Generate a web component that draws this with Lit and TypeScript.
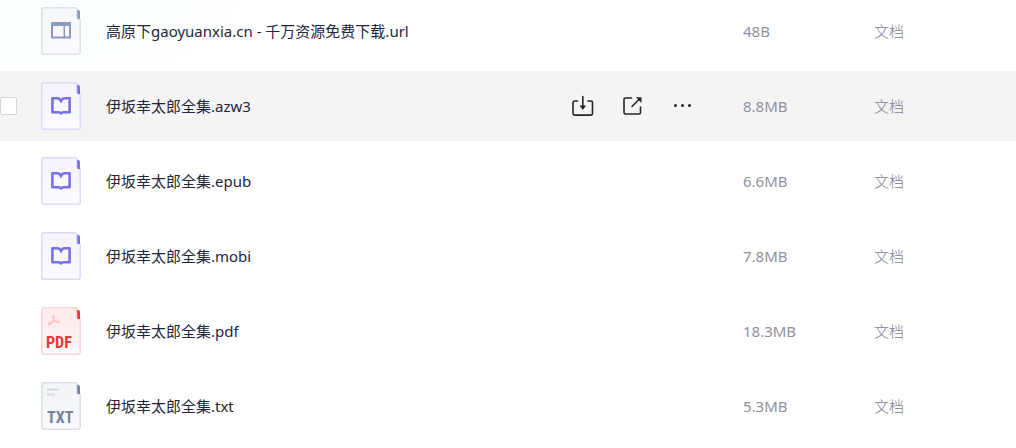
import { LitElement, html, svg, css } from "lit";
import { customElement, property, state } from "lit/decorators.js";
import { classMap } from "lit/directives/class-map.js";

type Kind = "url" | "book" | "pdf" | "txt";

interface FileEntry {
  name: string;
  kind: Kind;
  size: string;
  type: string;
}

const FILES: FileEntry[] = [
  { name: "高原下gaoyuanxia.cn - 千万资源免费下载.url", kind: "url", size: "48B", type: "文档" },
  { name: "伊坂幸太郎全集.azw3", kind: "book", size: "8.8MB", type: "文档" },
  { name: "伊坂幸太郎全集.epub", kind: "book", size: "6.6MB", type: "文档" },
  { name: "伊坂幸太郎全集.mobi", kind: "book", size: "7.8MB", type: "文档" },
  { name: "伊坂幸太郎全集.pdf", kind: "pdf", size: "18.3MB", type: "文档" },
  { name: "伊坂幸太郎全集.txt", kind: "txt", size: "5.3MB", type: "文档" },
];

const GLYPHS = {
  url: svg`
    <path class="ink" fill-rule="evenodd" d="M11 15h18a1 1 0 0 1 1 1v14.500a1 1 0 0 1-1 1H11a1 1 0 0 1-1-1V16a1 1 0 0 1 1-1z M12 19v10.500h10.500V19z M24 19v10.500h4V19z"/>`,
  book: svg`
    <path class="line" d="M20 19c-.9-1.800-2-2.700-3.600-2.700H11.400v13.900h6c1.200 0 2 .4 2.600 1.300.6-.9 1.400-1.300 2.600-1.300h6V16.300h-5c-1.600 0-2.700.9-3.600 2.700z"/>
    <path class="ink" d="M18 17.500h4L20 21.500z"/>`,
  pdf: svg`
    <path class="faint" d="M12 8.500c1.400 0 1.500 1.300 1 3-.4 2-2.500 5.300-4.500 6.200-1.600.4-1.500-.9 0-1.700 2.500-1.400 6.500-2.400 9-1.800 1.500.6.500 1.600-1 1.200-2-.6-4.500-3.200-5-5.400-.2-.9 0-1.500.5-1.500z"/>
    <text class="label" x="5" y="41">PDF</text>`,
  txt: svg`
    <path class="bar" d="M6 7.500h12M6 12.500h8"/>
    <text class="label" x="6" y="41">TXT</text>`,
};

@customElement("file-icon")
export class FileIcon extends LitElement {
  @property({ reflect: true }) kind: Kind = "txt";

  static styles = css`
    :host {
      display: block;
      width: 40px;
      height: 48px;
      --ink: #8d9abd;
      --edge: #dde1ec;
      --paper: #f6f8fc;
    }
    :host([kind="book"]) {
      --ink: #7672e2;
      --edge: #dcdaf8;
      --paper: #f6f5fe;
    }
    :host([kind="pdf"]) {
      --ink: #e5393d;
      --edge: #f9d5d5;
      --paper: #fdecec;
    }
    :host([kind="txt"]) {
      --ink: #76839d;
      --edge: #dadee7;
      --paper: #f3f5f8;
    }
    .sheet {
      display: block;
    }
    .paper {
      stroke: var(--edge);
      stroke-width: 1.5;
    }
    .stop {
      stop-color: var(--paper);
    }
    .end {
      stop-color: #fbfbfe;
    }
    .ink {
      fill: var(--ink);
    }
    .line {
      fill: none;
      stroke: var(--ink);
      stroke-width: 2.6;
      stroke-linejoin: round;
    }
    .faint {
      fill: none;
      stroke: #f8c9c9;
      stroke-width: 1.6;
    }
    .bar {
      stroke: #d5d8de;
      stroke-width: 2;
    }
    .label {
      fill: var(--ink);
      font: bold 16px "Liberation Sans Narrow", "Roboto Condensed", "Liberation Sans", sans-serif;
    }
  `;

  render() {
    return html`<svg class="sheet" width="40" height="48" viewBox="0 0 40 48" aria-hidden="true">
      <defs>
        <linearGradient id="fill" x1="0" y1="0" x2="0" y2="1">
          <stop class="stop" offset="0.3" />
          <stop class="end" offset="1" />
        </linearGradient>
      </defs>
      <path
        class="paper"
        fill="url(#fill)"
        d="M3 .8h31.500a1.500 1.500 0 0 1 1.500 1.500v7.900a2 2 0 0 0 2 2h1.200V45a2.200 2.200 0 0 1-2.200 2.200H3A2.200 2.200 0 0 1 .8 45V3A2.200 2.200 0 0 1 3 .8z"
      />
      <path class="ink" d="M36.200 2.800c2 0 2.800 1 2.800 2.600V12h-1.200a1.600 1.600 0 0 1-1.600-1.600z" />
      ${GLYPHS[this.kind]}
    </svg>`;
  }
}

@customElement("row-actions")
export class RowActions extends LitElement {
  static styles = css`
    :host {
      display: flex;
    }
    .action {
      display: grid;
      place-items: center;
      width: 50px;
      height: 40px;
      padding: 0;
      border: 0;
      background: none;
      color: #25262b;
      cursor: pointer;
    }
    .glyph {
      fill: none;
      stroke: currentColor;
      stroke-width: 1.6;
      stroke-linecap: round;
      stroke-linejoin: round;
    }
    .solid {
      fill: currentColor;
      stroke: none;
    }
  `;

  render() {
    return html`
      <button class="action" type="button" aria-label="下载">
        <svg class="glyph" width="24" height="24" viewBox="0 0 24 24">
          <path d="M6.500 7H3.600A1.600 1.600 0 0 0 2 8.600v10.900a1.600 1.600 0 0 0 1.600 1.600h16.300a1.600 1.600 0 0 0 1.600-1.600V8.600A1.600 1.600 0 0 0 19.900 7H17M11.800 2.500V14" />
          <path class="solid" d="M8.500 11.500h6.600L11.800 16z" />
        </svg>
      </button>
      <button class="action" type="button" aria-label="分享">
        <svg class="glyph" width="24" height="24" viewBox="0 0 24 24">
          <path d="M10.500 4H4.500A1.500 1.500 0 0 0 3 5.500v13A1.500 1.500 0 0 0 4.500 20h13.500a1.500 1.500 0 0 0 1.500-1.500V13M11 12.500L18.500 5" />
          <path class="solid" d="M14.800 3.200H20.500V8.900z" />
        </svg>
      </button>
      <button class="action" type="button" aria-label="更多">
        <svg class="glyph" width="24" height="24" viewBox="0 0 24 24">
          <g class="solid">
            <circle cx="4.500" cy="11.500" r="1.500" />
            <circle cx="11.500" cy="11.500" r="1.500" />
            <circle cx="18.500" cy="11.500" r="1.500" />
          </g>
        </svg>
      </button>
    `;
  }
}

@customElement("app-root")
export class AppRoot extends LitElement {
  @state() private active = 1;

  static styles = css`
    :host {
      display: block;
      height: 100vh;
      overflow: hidden;
      background: radial-gradient(ellipse 320px 120px at 0 0, #f9feff, #ffffff);
      font: 15px/20px "Noto Sans", "Noto Sans CJK SC", sans-serif;
      color: #25263a;
    }
    /* The list rests slightly scrolled under the top edge. */
    .files {
      width: 100%;
      margin-top: -4px;
      table-layout: fixed;
      border-collapse: separate;
      border-spacing: 0;
    }
    .pick-col {
      width: 41px;
    }
    .size-col {
      width: 131px;
    }
    .type-col {
      width: 142px;
    }
    .cell {
      height: 70px;
      padding: 0;
      border-bottom: 5px solid transparent;
      background-clip: padding-box;
      text-align: left;
      vertical-align: middle;
      color: #9091a0;
    }
    .kind {
      font-weight: 300;
      color: #7c7d90;
    }
    .active .cell {
      background-color: #f4f4f4;
    }
    .pick {
      display: block;
      appearance: none;
      box-sizing: border-box;
      width: 17px;
      height: 18px;
      margin: 0;
      border: 1px solid #d5d5d8;
      border-radius: 2px;
      background: #ffffff;
    }
    .pick:checked {
      background: #7672e2;
    }
    .entry {
      display: flex;
      align-items: center;
      gap: 25px;
      padding-right: 35px;
    }
    .name {
      flex: 1;
      min-width: 0;
      overflow: hidden;
      text-overflow: ellipsis;
      white-space: nowrap;
      color: #25263a;
    }
  `;

  private row(file: FileEntry, index: number) {
    const active = index === this.active;
    return html`<tr class=${classMap({ active })} @click=${() => (this.active = index)}>
      <td class="cell">
        ${active ? html`<input class="pick" type="checkbox" aria-label=${file.name} />` : null}
      </td>
      <td class="cell">
        <div class="entry">
          <file-icon kind=${file.kind}></file-icon>
          <span class="name">${file.name}</span>
          ${active ? html`<row-actions></row-actions>` : null}
        </div>
      </td>
      <td class="cell">${file.size}</td>
      <td class="cell kind">${file.type}</td>
    </tr>`;
  }

  render() {
    return html`<table class="files">
      <colgroup>
        <col class="pick-col" />
        <col />
        <col class="size-col" />
        <col class="type-col" />
      </colgroup>
      <tbody>
        ${FILES.map((file, index) => this.row(file, index))}
      </tbody>
    </table>`;
  }
}
